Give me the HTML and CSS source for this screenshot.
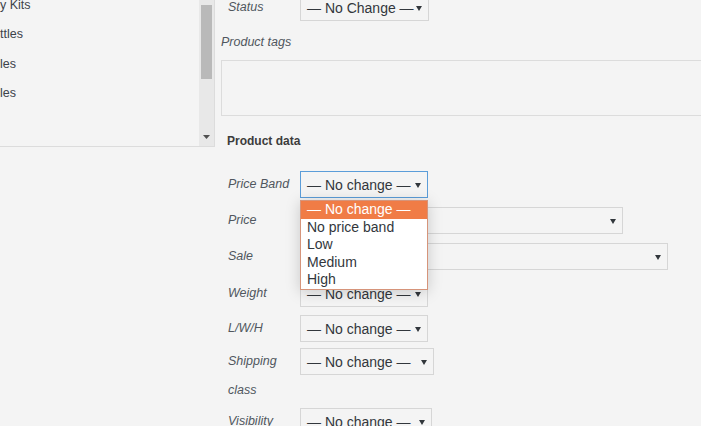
FILE: index.html
```html
<!DOCTYPE html>
<html>
<head>
<meta charset="utf-8">
<link rel="stylesheet" href="styles.css">
</head>
<body>
<div class="page">
  <aside class="cats">
    <ul class="cat-list">
      <li>y Kits</li>
      <li>ttles</li>
      <li>les</li>
      <li>les</li>
    </ul>
    <div class="scrollbar">
      <div class="thumb"></div>
      <svg class="scroll-arrow" width="7" height="4" viewBox="0 0 7 4"><polygon points="0,0 7,0 3.5,4" fill="#505050"/></svg>
    </div>
  </aside>

  <main class="edit">
    <div class="row row-status">
      <span class="label">Status</span>
      <div class="select w-status"><span>— No Change —</span><svg class="caret" width="6" height="5" viewBox="0 0 6 5"><polygon points="0,0 6,0 3,5" fill="#32373c"/></svg></div>
    </div>

    <div class="label tags-label">Product tags</div>
    <div class="textarea"></div>

    <h3 class="section">Product data</h3>

    <div class="rows">
      <div class="row r-band">
        <span class="label">Price Band</span>
        <div class="select w-small focused"><span>— No change —</span><svg class="caret" width="6" height="5" viewBox="0 0 6 5"><polygon points="0,0 6,0 3,5" fill="#32373c"/></svg>
          <ul class="dropdown">
            <li class="active">— No change —</li>
            <li>No price band</li>
            <li>Low</li>
            <li>Medium</li>
            <li>High</li>
          </ul>
        </div>
      </div>

      <div class="row r-price">
        <span class="label">Price</span>
        <div class="select w-price"><span>— No change —</span><svg class="caret" width="6" height="5" viewBox="0 0 6 5"><polygon points="0,0 6,0 3,5" fill="#32373c"/></svg></div>
      </div>

      <div class="row r-sale">
        <span class="label">Sale</span>
        <div class="select w-sale"><span>— No change —</span><svg class="caret" width="6" height="5" viewBox="0 0 6 5"><polygon points="0,0 6,0 3,5" fill="#32373c"/></svg></div>
      </div>

      <div class="row r-weight">
        <span class="label">Weight</span>
        <div class="select w-small"><span>— No change —</span><svg class="caret" width="6" height="5" viewBox="0 0 6 5"><polygon points="0,0 6,0 3,5" fill="#32373c"/></svg></div>
      </div>

      <div class="row r-lwh">
        <span class="label">L/W/H</span>
        <div class="select w-small"><span>— No change —</span><svg class="caret" width="6" height="5" viewBox="0 0 6 5"><polygon points="0,0 6,0 3,5" fill="#32373c"/></svg></div>
      </div>

      <div class="row r-ship">
        <span class="label label-wrap">Shipping class</span>
        <div class="select w-ship"><span>— No change —</span><svg class="caret" width="6" height="5" viewBox="0 0 6 5"><polygon points="0,0 6,0 3,5" fill="#32373c"/></svg></div>
      </div>

      <div class="row r-vis">
        <span class="label">Visibility</span>
        <div class="select w-vis"><span>— No change —</span><svg class="caret" width="6" height="5" viewBox="0 0 6 5"><polygon points="0,0 6,0 3,5" fill="#32373c"/></svg></div>
      </div>
    </div>
  </main>
</div>
</body>
</html>
```

FILE: styles.css
```css
html, body {
  margin: 0;
  padding: 0;
}

body {
  width: 701px;
  height: 426px;
  overflow: hidden;
  background: #f4f4f4;
  font-family: "Liberation Sans", Arial, sans-serif;
  color: #32373c;
}

.page {
  display: flex;
  align-items: flex-start;
  margin-top: -6px;
}

/* ---------- category box ---------- */
.cats {
  flex: none;
  width: 214px;
  height: 152px;
  display: flex;
  border-right: 1px solid #dcdcdc;
  border-bottom: 1px solid #dcdcdc;
  background: #f4f4f4;
}

.cat-list {
  flex: 1;
  list-style: none;
  margin: -3px 0 0;
  padding: 0;
  font-size: 12.5px;
  line-height: 29.4px;
  color: #3c434a;
}

.scrollbar {
  flex: none;
  width: 15px;
  background: #e8e8e8;
  display: flex;
  flex-direction: column;
  align-items: center;
}

.thumb {
  width: 11px;
  height: 74px;
  margin-top: 11px;
  background: #b9b9b9;
}

.scroll-arrow {
  display: block;
  margin-top: auto;
  margin-bottom: 7px;
}

/* ---------- edit column ---------- */
.edit {
  flex: 1;
  padding-left: 6px;
}

.row {
  display: flex;
  align-items: flex-start;
  padding-left: 7px;
}

.label {
  flex: none;
  width: 72px;
  font-size: 12.5px;
  font-style: italic;
  line-height: 27px;
  color: #50575e;
}

.label-wrap {
  width: 62px;
  line-height: 29px;
  margin-top: -1px;
  padding-right: 10px;
}

.tags-label {
  width: auto;
  margin-top: 12px;
  line-height: 18px;
}

.textarea {
  width: 520px;
  height: 56px;
  box-sizing: border-box;
  margin-top: 9px;
  border: 1px solid #dcdcdc;
  background: #f4f4f4;
}

.section {
  margin: 16px 0 0;
  padding-left: 6px;
  font-size: 12px;
  font-weight: bold;
  line-height: 18px;
  color: #3c3c3c;
}

.rows {
  margin-top: 21px;
}

.r-price { margin-top: 9px; }
.r-sale { margin-top: 9px; }
.r-weight { margin-top: 10px; }
.r-lwh { margin-top: 8px; }
.r-ship { margin-top: 6px; }
.r-vis { margin-top: 3px; }

/* ---------- select ---------- */
.select {
  position: relative;
  flex: none;
  display: flex;
  align-items: center;
  justify-content: space-between;
  height: 27px;
  box-sizing: border-box;
  padding: 1px 6px 0 6px;
  border: 1px solid #d6d6d6;
  background: #f4f4f4;
  font-size: 14px;
  color: #32373c;
  white-space: nowrap;
}

.select.focused {
  border-color: #5b9dd9;
}

.caret {
  display: block;
  flex: none;
}

.w-status { width: 129px; }
.w-small { width: 128px; }
.w-price { width: 323px; }
.w-sale { width: 368px; }
.w-ship { width: 134px; }
.w-vis { width: 132px; }

/* ---------- open dropdown ---------- */
.dropdown {
  position: absolute;
  top: 28px;
  left: -1px;
  z-index: 10;
  width: 128px;
  box-sizing: border-box;
  margin: 0;
  padding: 0;
  list-style: none;
  background: #ffffff;
  border: 1px solid #d6947a;
  box-shadow: 0 2px 14px rgba(0, 0, 0, 0.18);
  font-size: 14px;
  line-height: 17.6px;
  color: #32373c;
}

.dropdown li {
  padding-left: 6px;
}

.dropdown li.active {
  background: #f07c46;
  color: #ffffff;
}
```
